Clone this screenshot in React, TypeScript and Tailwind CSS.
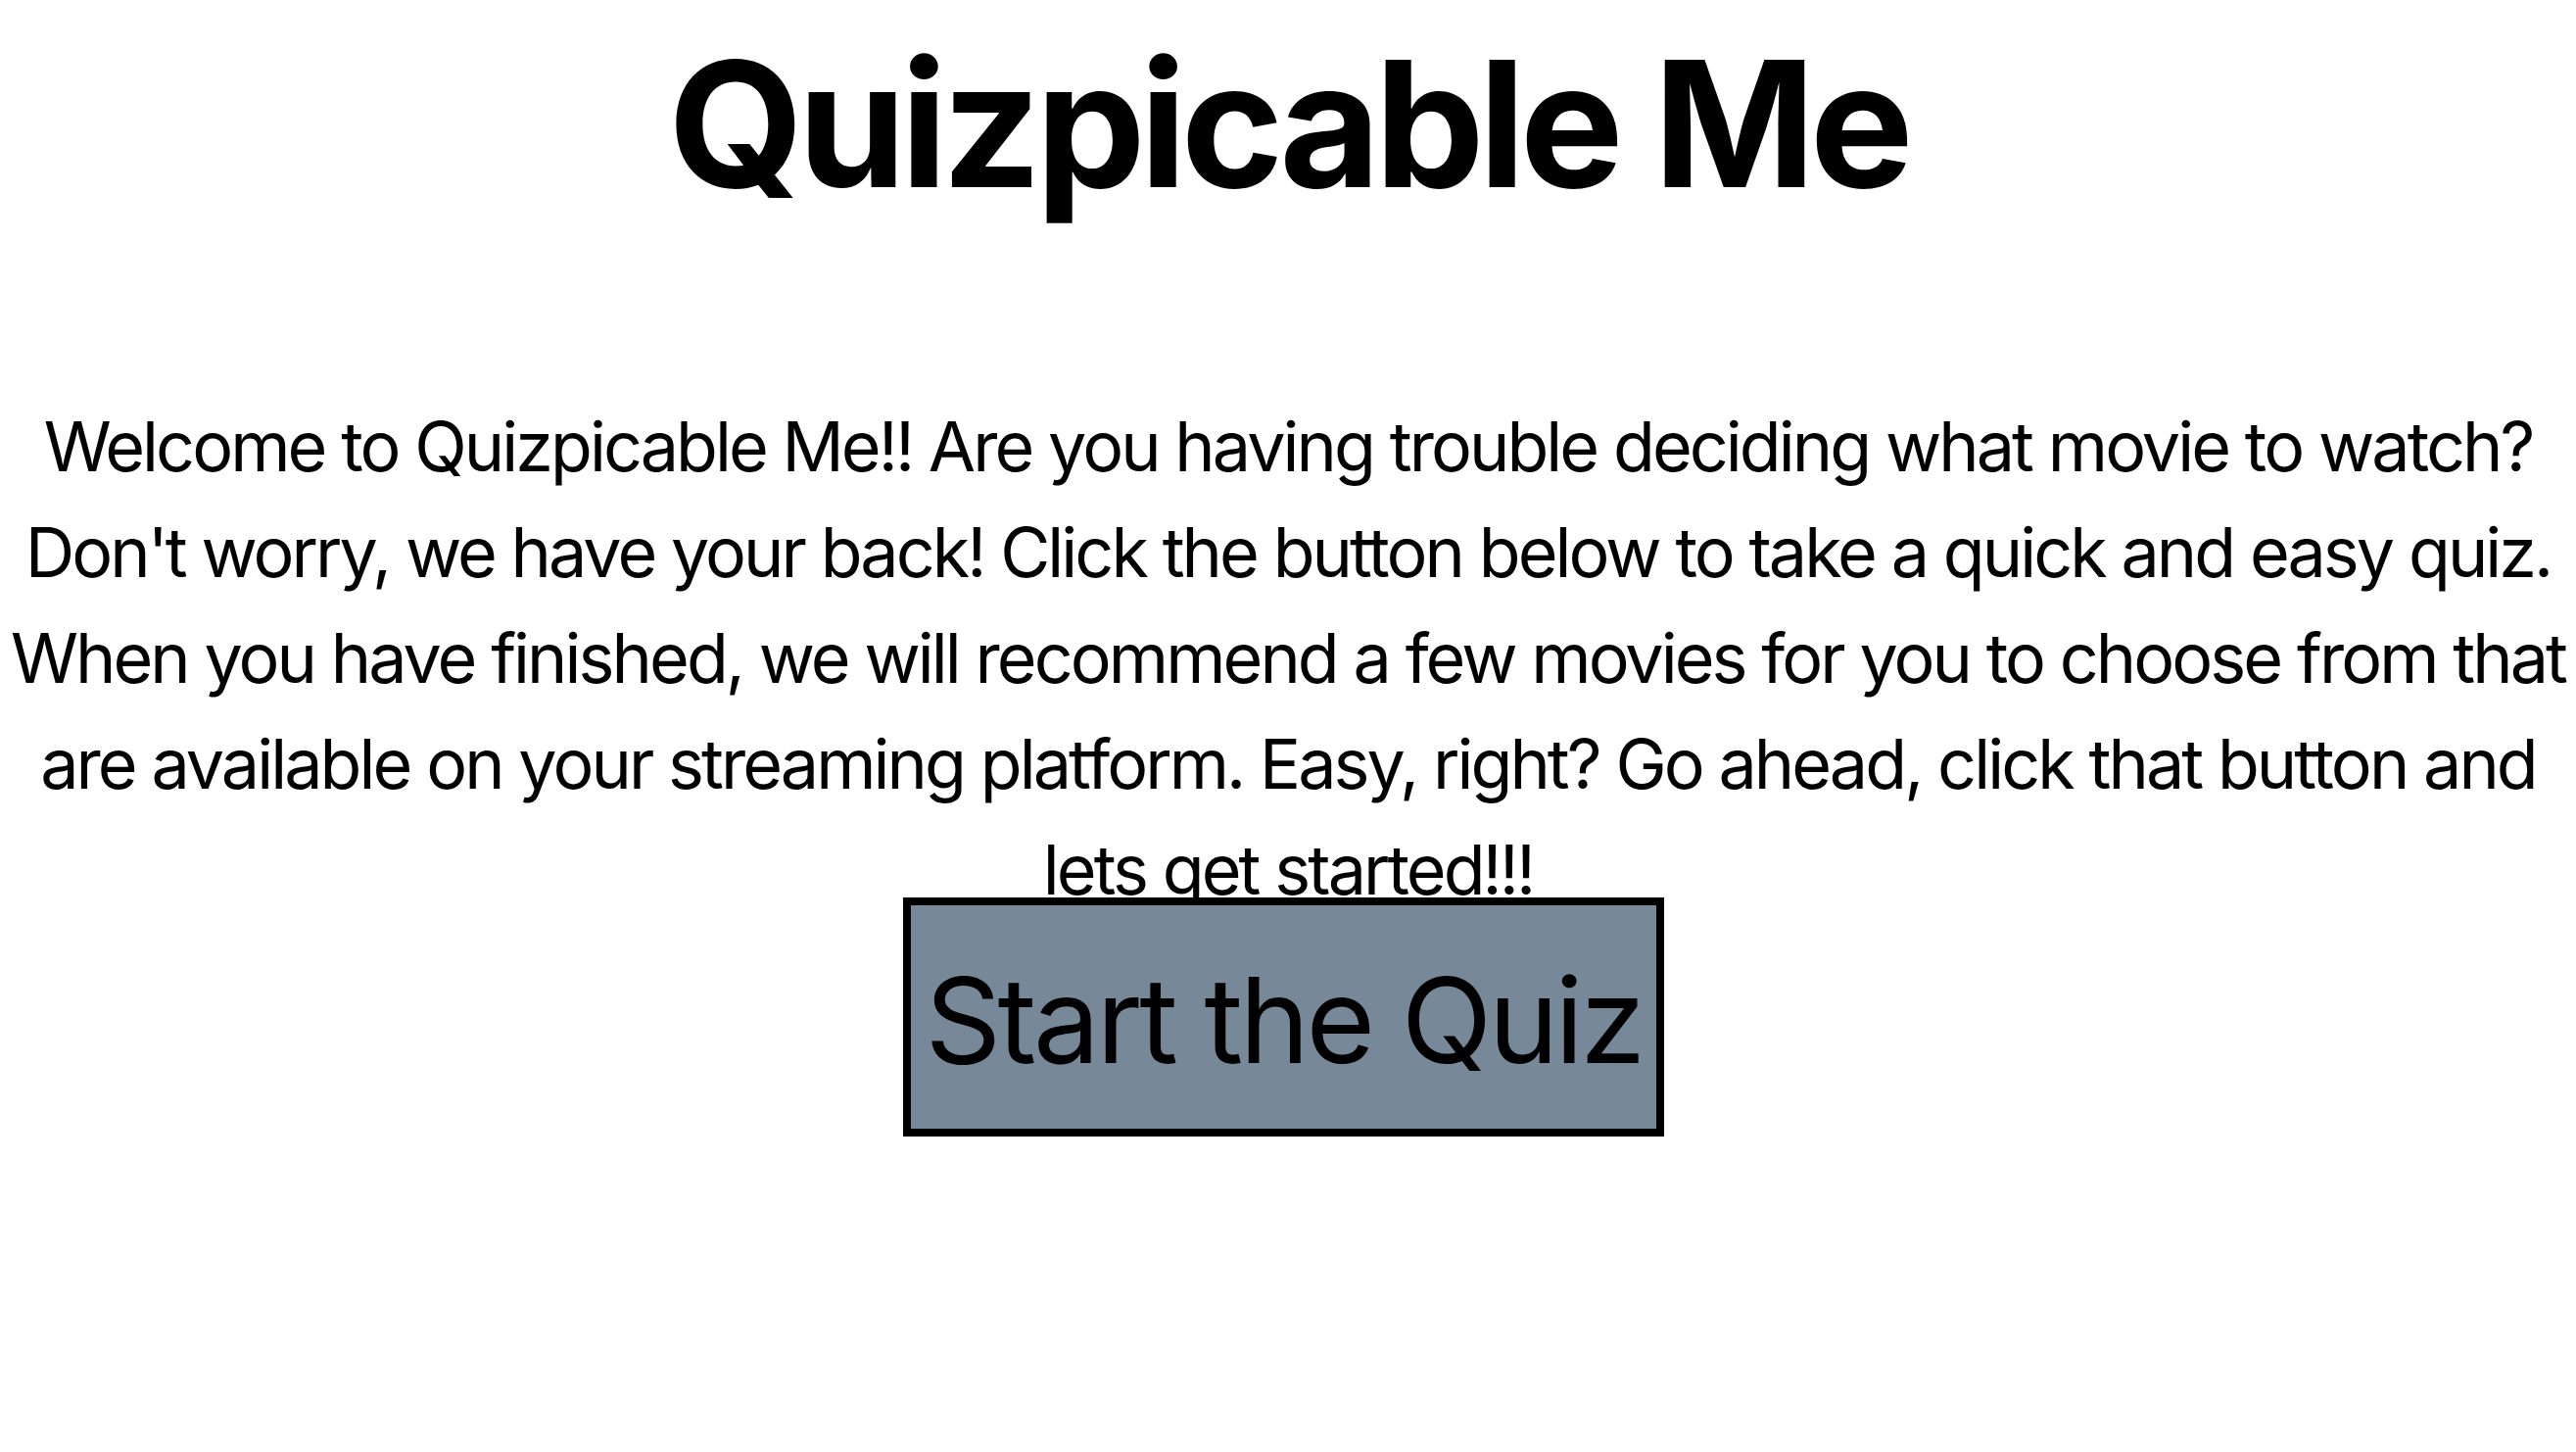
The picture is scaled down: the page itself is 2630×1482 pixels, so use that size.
export default function App() {
    return (
        <div className="min-h-screen w-full bg-white flex flex-col items-center text-black" style={{ fontFamily: "Inter, 'Noto Sans', sans-serif" }}>
            {/* Title */}
            <h1 className="mt-[38px] text-[178px] leading-none font-bold tracking-[-0.034em] text-center">Quizpicable Me</h1>

            {/* Intro */}
            <p className="mt-[186px] px-[10px] text-[70px] leading-[108px] tracking-[-0.042em] text-center">
                Welcome to Quizpicable Me!! Are you having trouble deciding what movie to watch? Don't worry, we have your back! Click the button below to take a quick and easy quiz. When you have finished, we will recommend a few movies for you to choose from that are available on your streaming platform. Easy, right? Go ahead, click that button and lets get started!!!
            </p>

            <button className="relative -mt-[26px] mr-[9px] w-[777px] h-[244px] border-8 border-black bg-[#778899] text-[121px] leading-none tracking-[-0.03em] whitespace-nowrap flex items-center justify-center pt-[6px]">
                Start the Quiz
            </button>
        </div>
    )
}
